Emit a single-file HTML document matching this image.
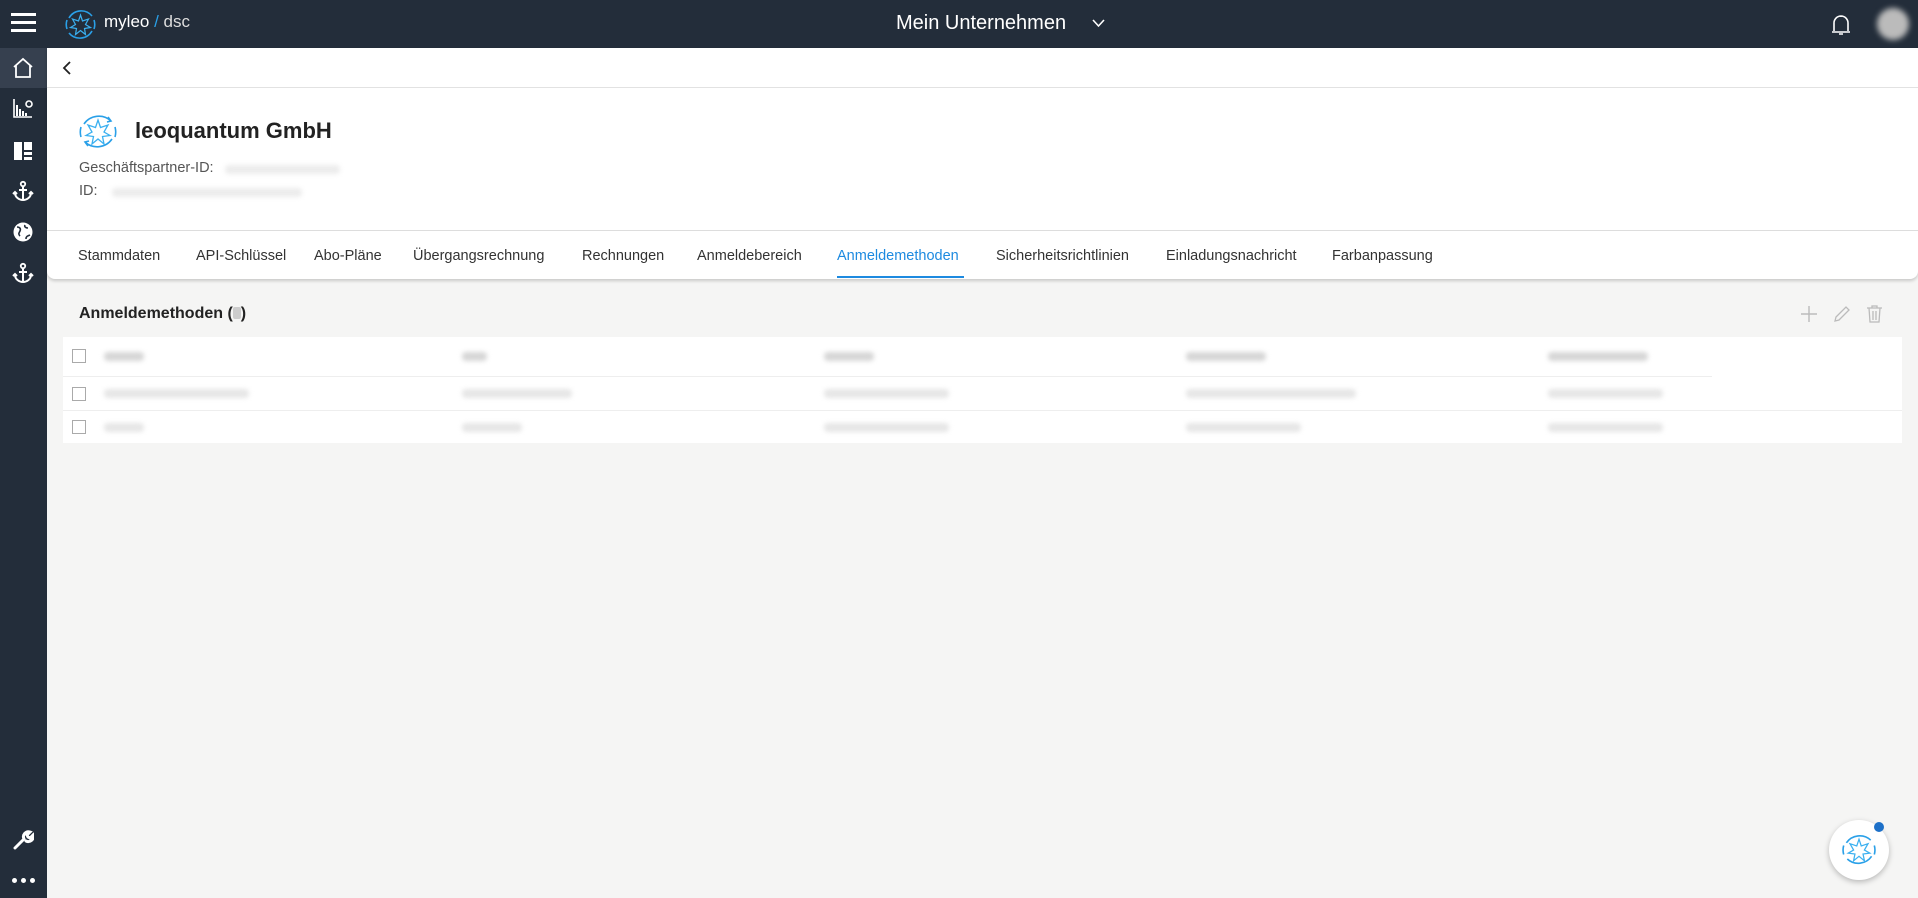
<!DOCTYPE html>
<html><head><meta charset="utf-8"><style>
*{box-sizing:border-box;margin:0;padding:0}
body{width:1918px;height:898px;background:#f5f5f4;font-family:"Liberation Sans",sans-serif;position:relative;overflow:hidden;color:#222}
.top{position:absolute;left:0;top:0;width:1918px;height:48px;background:#232d3a}
.side{position:absolute;left:0;top:48px;width:47px;height:850px;background:#232d3a}
.ab{position:absolute}
.card{position:absolute;left:47px;top:48px;width:1871px;height:231px;background:#fff;border-radius:0 0 8px 8px;box-shadow:0 2px 3px rgba(0,0,0,.18)}
.tab{position:absolute;top:248px;font-size:14.5px;color:#333}
.blur{position:absolute;height:9px;background:#e6e6e6;border-radius:4px;filter:blur(2.5px)}
.cb{position:absolute;left:72px;width:14px;height:14px;border:1.5px solid #aaa;background:#fff}
</style></head><body>
<div class="top"></div>
<div class="side"></div>
<div class="ab" style="left:0;top:48px;width:47px;height:40px;background:#36404f"></div>
<div class="ab" style="left:11px;top:13px;width:25px;height:3px;background:#fff"></div>
<div class="ab" style="left:11px;top:21px;width:25px;height:3px;background:#fff"></div>
<div class="ab" style="left:11px;top:29px;width:25px;height:3px;background:#fff"></div>
<svg class="ab" style="left:64px;top:8px" width="33" height="33" viewBox="0 0 33 33"><path d="M28 8A14 14 0 0 0 5 10M5 25a14 14 0 0 0 23-2M30 12a14 14 0 0 1 0 9M3 21a14 14 0 0 1 0-9" fill="none" stroke="#2aa0e8" stroke-width="1.6"/><path d="M16.5 7l2 6 6-2-3 5.5 5 3-6 1 1 6-5-4-5 4 1-6-6-1 5-3-3-5.5 6 2z" fill="none" stroke="#3bb0f0" stroke-width="1.2"/></svg>
<div class="ab" style="left:104px;top:12px;font-size:17px;color:#fff">myleo <span style="color:#2aa0e8">/</span><span style="color:#ddd"> dsc</span></div>
<div class="ab" style="left:896px;top:12px;font-size:20px;color:#fff">Mein Unternehmen</div>
<svg class="ab" style="left:1092px;top:19px" width="13" height="9"><path d="M1 1l5.5 6 5.5-6" fill="none" stroke="#fff" stroke-width="1.6"/></svg>
<svg class="ab" style="left:1829px;top:13px" width="24" height="24" viewBox="0 0 24 24"><path d="M5 18V10a7 7 0 0 1 14 0v8M3 19h18M10 21h4M12 3v1" fill="none" stroke="#fff" stroke-width="1.6"/></svg>
<div class="ab" style="left:1877px;top:8px;width:32px;height:32px;background:#bbb;border-radius:50%;filter:blur(3px)"></div>
<svg class="ab" style="left:11px;top:56px" width="24" height="24" viewBox="0 0 24 24"><path d="M3 11L12 3l9 8M5 9v12h14V9" fill="none" stroke="#fff" stroke-width="1.8"/></svg>
<svg class="ab" style="left:12px;top:97px" width="22" height="22" viewBox="0 0 22 22"><path d="M2 2v18h18" fill="none" stroke="#fff" stroke-width="1.6"/><path d="M5 8v11M8 12v7M11 14v5M14 16v3" stroke="#fff" stroke-width="2"/><circle cx="17" cy="7" r="3" fill="none" stroke="#fff" stroke-width="1.6"/></svg>
<svg class="ab" style="left:13px;top:141px" width="20" height="20"><path d="M1 1h8v18H1zM11 1h8v8h-8zM11 11h8v3h-8zM11 16h8v3h-8z" fill="#fff"/></svg>
<svg class="ab" style="left:12px;top:180px" width="22" height="22" viewBox="0 0 22 22"><circle cx="11" cy="4" r="2.2" fill="none" stroke="#fff" stroke-width="1.8"/><path d="M11 6v14M7 10h8M3 13c0 4 4 7 8 7s8-3 8-7M1 14l2-2 2 2M17 14l2-2 2 2" fill="none" stroke="#fff" stroke-width="2"/></svg>
<svg class="ab" style="left:12px;top:221px" width="22" height="22" viewBox="0 0 22 22"><circle cx="11" cy="11" r="9.5" fill="#fff"/><path d="M5 6c3 0 4 2 3 4s-2 3 0 5M13 4c-1 2 1 3 3 3M14 18c0-3 2-3 4-4" fill="none" stroke="#232d3a" stroke-width="1.6"/></svg>
<svg class="ab" style="left:12px;top:262px" width="22" height="22" viewBox="0 0 22 22"><circle cx="11" cy="4" r="2.2" fill="none" stroke="#fff" stroke-width="1.8"/><path d="M11 6v14M7 10h8M3 13c0 4 4 7 8 7s8-3 8-7M1 14l2-2 2 2M17 14l2-2 2 2" fill="none" stroke="#fff" stroke-width="2"/></svg>
<svg class="ab" style="left:12px;top:829px" width="22" height="22" viewBox="0 0 22 22"><path d="M3 19l9-9M12 10a5 5 0 0 1 6-7l-3 3 1 2 2 1 3-3a5 5 0 0 1-7 6" fill="none" stroke="#fff" stroke-width="3" stroke-linecap="round"/></svg>
<div class="ab" style="left:12px;top:878px;width:5px;height:5px;border-radius:50%;background:#fff"></div>
<div class="ab" style="left:21px;top:878px;width:5px;height:5px;border-radius:50%;background:#fff"></div>
<div class="ab" style="left:30px;top:878px;width:5px;height:5px;border-radius:50%;background:#fff"></div>
<div class="card"></div>
<div class="ab" style="left:47px;top:87px;width:1871px;height:1px;background:#e2e2e2"></div>
<div class="ab" style="left:47px;top:230px;width:1871px;height:1px;background:#ddd"></div>
<svg class="ab" style="left:60px;top:60px" width="14" height="16"><path d="M10 2L4 8l6 6" fill="none" stroke="#222" stroke-width="1.8"/></svg>
<svg class="ab" style="left:78px;top:112px" width="40" height="40" viewBox="0 0 40 40"><path d="M33 9A18 18 0 0 0 6 12M7 30a18 18 0 0 0 27-3M37 15a18 18 0 0 1 0 10M3 25a18 18 0 0 1 0-10M30 5l3 4-4 1M10 34l-3-4 4-1" fill="none" stroke="#2aa0e8" stroke-width="1.6"/><path d="M20 8l2.5 7.5 7.5-2.5-4 7 6 3.5-7.5 1 1.5 7.5-6-5-6 5 1.5-7.5-7.5-1 6-3.5-4-7 7.5 2.5z" fill="none" stroke="#3bb0f0" stroke-width="1.3"/></svg>
<div class="ab" style="left:135px;top:118px;font-size:22px;font-weight:bold;color:#222">leoquantum GmbH</div>
<div class="ab" style="left:79px;top:160px;font-size:14.5px;color:#555">Geschäftspartner-ID:</div>
<div class="blur" style="left:225px;top:165px;width:115px;background:#ececec"></div>
<div class="ab" style="left:79px;top:183px;font-size:14.5px;color:#555">ID:</div>
<div class="blur" style="left:112px;top:188px;width:190px;background:#ececec"></div>
<div class="tab" style="left:78px">Stammdaten</div>
<div class="tab" style="left:196px">API-Schlüssel</div>
<div class="tab" style="left:314px">Abo-Pläne</div>
<div class="tab" style="left:413px">Übergangsrechnung</div>
<div class="tab" style="left:582px">Rechnungen</div>
<div class="tab" style="left:697px">Anmeldebereich</div>
<div class="tab" style="left:837px;color:#1d8ae0">Anmeldemethoden</div>
<div class="ab" style="left:837px;top:276px;width:127px;height:2px;background:#1d8ae0"></div>
<div class="tab" style="left:996px">Sicherheitsrichtlinien</div>
<div class="tab" style="left:1166px">Einladungsnachricht</div>
<div class="tab" style="left:1332px">Farbanpassung</div>
<div class="ab" style="left:79px;top:305px;font-size:16px;font-weight:bold;color:#222">Anmeldemethoden (<span style="display:inline-block;width:8px;height:12px;background:#ccc;border-radius:2px;vertical-align:-1px"></span>)</div>
<svg class="ab" style="left:1800px;top:305px" width="18" height="18"><path d="M9 1v16M1 9h16" stroke="#bbb" stroke-width="1.4"/></svg>
<svg class="ab" style="left:1833px;top:305px" width="18" height="18"><path d="M2 16l1-4 10-10 3 3-10 10z" fill="none" stroke="#bbb" stroke-width="1.3"/></svg>
<svg class="ab" style="left:1866px;top:304px" width="17" height="19"><path d="M1 4h15M6 4V2h5v2M3 4l1 14h9l1-14M7 7v9M10 7v9" fill="none" stroke="#bbb" stroke-width="1.3"/></svg>
<div class="ab" style="left:63px;top:337px;width:1839px;height:106px;background:#fff"></div>
<div class="ab" style="left:63px;top:376px;width:1649px;height:1px;background:#eee"></div>
<div class="ab" style="left:63px;top:410px;width:1839px;height:1px;background:#eee"></div>
<div class="cb" style="top:349px"></div>
<div class="cb" style="top:387px"></div>
<div class="cb" style="top:420px"></div>
<div class="blur" style="left:104px;top:352px;width:40px;background:#d6d6d6"></div>
<div class="blur" style="left:462px;top:352px;width:25px;background:#d6d6d6"></div>
<div class="blur" style="left:824px;top:352px;width:50px;background:#d6d6d6"></div>
<div class="blur" style="left:1186px;top:352px;width:80px;background:#d6d6d6"></div>
<div class="blur" style="left:1548px;top:352px;width:100px;background:#d6d6d6"></div>
<div class="blur" style="left:104px;top:389px;width:145px"></div>
<div class="blur" style="left:462px;top:389px;width:110px"></div>
<div class="blur" style="left:824px;top:389px;width:125px"></div>
<div class="blur" style="left:1186px;top:389px;width:170px"></div>
<div class="blur" style="left:1548px;top:389px;width:115px"></div>
<div class="blur" style="left:104px;top:423px;width:40px"></div>
<div class="blur" style="left:462px;top:423px;width:60px"></div>
<div class="blur" style="left:824px;top:423px;width:125px"></div>
<div class="blur" style="left:1186px;top:423px;width:115px"></div>
<div class="blur" style="left:1548px;top:423px;width:115px"></div>
<div class="ab" style="left:1829px;top:820px;width:60px;height:60px;border-radius:50%;background:#fff;box-shadow:0 2px 6px rgba(0,0,0,.25)"></div>
<svg class="ab" style="left:1841px;top:832px" width="36" height="36" viewBox="0 0 40 40"><path d="M33 9A18 18 0 0 0 6 12M7 30a18 18 0 0 0 27-3M37 15a18 18 0 0 1 0 10M3 25a18 18 0 0 1 0-10" fill="none" stroke="#2aa0e8" stroke-width="1.8"/><path d="M20 8l2.5 7.5 7.5-2.5-4 7 6 3.5-7.5 1 1.5 7.5-6-5-6 5 1.5-7.5-7.5-1 6-3.5-4-7 7.5 2.5z" fill="none" stroke="#3bb0f0" stroke-width="1.4"/></svg>
<div class="ab" style="left:1874px;top:822px;width:10px;height:10px;border-radius:50%;background:#1d70c8"></div>
</body></html>
